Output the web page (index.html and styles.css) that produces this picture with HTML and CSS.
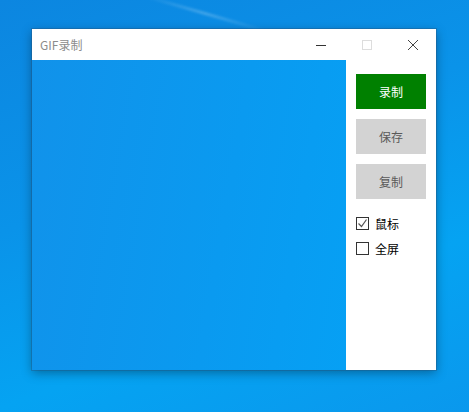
FILE: index.html
```html
<!DOCTYPE html>
<html lang="zh-CN">
<head>
  <meta charset="UTF-8">
  <title>GIF录制</title>
  <link rel="stylesheet" href="styles.css">
</head>
<body>
  <div class="desktop">
    <div class="streak"></div>
    <div class="window">
      <div class="titlebar">
        <span class="title">GIF录制</span>
        <div class="controls">
          <span class="ctl">
            <svg width="12" height="12" viewBox="0 0 12 12"><path d="M1 6.5h10" stroke="#333" stroke-width="1"/></svg>
          </span>
          <span class="ctl">
            <svg width="12" height="12" viewBox="0 0 12 12"><rect x="1.5" y="1.5" width="9" height="9" fill="none" stroke="#ddd" stroke-width="1"/></svg>
          </span>
          <span class="ctl">
            <svg width="12" height="12" viewBox="0 0 12 12"><path d="M1 1l10 10M11 1L1 11" stroke="#444" stroke-width="1"/></svg>
          </span>
        </div>
      </div>
      <div class="body">
        <div class="capture"></div>
        <div class="panel">
          <button class="btn btn-record">录制</button>
          <button class="btn btn-off">保存</button>
          <button class="btn btn-off">复制</button>
          <label class="check">
            <span class="box">
              <svg width="11" height="11" viewBox="0 0 11 11"><path d="M1.5 5.5l3 3 5-7" fill="none" stroke="#555" stroke-width="1.2"/></svg>
            </span>
            鼠标
          </label>
          <label class="check">
            <span class="box"></span>
            全屏
          </label>
        </div>
      </div>
    </div>
  </div>
</body>
</html>
```

FILE: styles.css
```css
html, body {
  margin: 0;
  height: 100%;
}
body {
  font-family: "Noto Sans CJK SC", "Noto Sans", sans-serif;
}
.desktop {
  position: relative;
  width: 469px;
  height: 412px;
  overflow: hidden;
  background: linear-gradient(160deg, #0c86e0 0%, #0a93e9 40%, #05a3f2 70%, #0a98ed 100%);
  padding-top: 29px;
  box-sizing: border-box;
}
.streak {
  position: absolute;
  left: 140px;
  top: 12px;
  width: 130px;
  height: 3px;
  background: linear-gradient(90deg, rgba(255,255,255,0), rgba(255,255,255,0.22) 50%, rgba(255,255,255,0));
  transform: rotate(16deg);
  filter: blur(1px);
}
.window {
  position: relative;
  margin-left: 32px;
  width: 404px;
  height: 341px;
  display: flex;
  flex-direction: column;
  box-shadow: 0 0 0 1px rgba(40, 80, 120, 0.35), 0 3px 10px rgba(0, 0, 0, 0.35);
}
.titlebar {
  height: 31px;
  background: #fff;
  display: flex;
  align-items: center;
  justify-content: space-between;
}
.title {
  font-size: 12px;
  color: #8c8c8c;
  padding-left: 8px;
}
.controls {
  display: flex;
}
.ctl {
  width: 46px;
  height: 30px;
  display: flex;
  align-items: center;
  justify-content: center;
}
.body {
  flex: 1;
  display: flex;
}
.capture {
  flex: 1;
  background: linear-gradient(100deg, #1192ea 0%, #0a9af0 60%, #06a0f4 100%);
}
.panel {
  width: 90px;
  background: #fff;
  padding: 14px 10px 0 10px;
  box-sizing: border-box;
  display: flex;
  flex-direction: column;
}
.btn {
  width: 70px;
  height: 35px;
  border: none;
  margin-bottom: 10px;
  font-family: inherit;
  font-size: 12px;
  padding: 0;
}
.btn-record {
  background: #008000;
  color: #fff;
}
.btn-off {
  background: #d3d3d3;
  color: #5a5a5a;
}
.check {
  display: flex;
  align-items: center;
  font-size: 12px;
  color: #000;
  height: 13px;
  margin-top: 8px;
  margin-bottom: 4px;
}
.check + .check {
  margin-top: 8px;
}
.box {
  width: 13px;
  height: 13px;
  border: 1px solid #333;
  box-sizing: border-box;
  margin-right: 6px;
  display: flex;
  align-items: center;
  justify-content: center;
  background: #fff;
}
```
